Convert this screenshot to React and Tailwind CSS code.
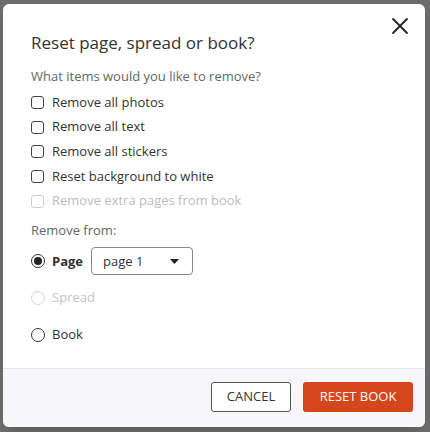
import React, { useState } from 'react';

const items = [
  { label: 'Remove all photos', disabled: false },
  { label: 'Remove all text', disabled: false },
  { label: 'Remove all stickers', disabled: false },
  { label: 'Reset background to white', disabled: false },
  { label: 'Remove extra pages from book', disabled: true },
];

const Checkbox = ({ label, disabled }) => (
  <label className={`flex items-center gap-[8px] h-[24.7px] ${disabled ? 'text-[#bdbdbd]' : 'text-[#333]'}`}>
    <span className={`w-[13px] h-[13px] rounded-[3px] border-[1.5px] ${disabled ? 'border-[#cfcfcf]' : 'border-[#444]'} bg-white`} />
    <span className="text-[13px]">{label}</span>
  </label>
);

const Radio = ({ label, checked, disabled, bold }) => (
  <div className={`flex items-center gap-[7px] ${disabled ? 'text-[#c4c4c4]' : 'text-[#333]'}`}>
    <span
      className={`w-[14px] h-[14px] rounded-full border-[1.5px] flex items-center justify-center bg-white ${
        disabled ? 'border-[#d4d4d4]' : 'border-[#333]'
      }`}
    >
      {checked && <span className="w-[8px] h-[8px] rounded-full bg-[#222]" />}
    </span>
    <span className={`text-[13px] ${bold ? 'font-bold' : ''}`}>{label}</span>
  </div>
);

export default function App() {
  const [page] = useState('page 1');
  return (
    <div
      className="w-[430px] h-[432px] bg-[#6d6d6d] pt-[4px] pl-[3px] pr-[5px] pb-[5px]"
      style={{ fontFamily: '"Open Sans", "Liberation Sans", sans-serif' }}
    >
      <div className="relative h-full bg-white rounded-[6px] flex flex-col overflow-hidden shadow-lg">
        <button className="absolute right-[16px] top-[13px] text-[#222]">
          <svg width="18" height="18" viewBox="0 0 18 18" fill="none" stroke="currentColor" strokeWidth="1.8" strokeLinecap="round">
            <path d="M2 2 L16 16 M16 2 L2 16" />
          </svg>
        </button>
        <div className="flex-1 pl-[28px] pt-[27px]">
          <h2 className="text-[17px] leading-[24px] text-[#333]">Reset page, spread or book?</h2>
          <p className="mt-[12px] text-[13px] leading-[18px] text-[#666]">What items would you like to remove?</p>
          <div className="mt-[5px] flex flex-col">
            {items.map(it => (
              <Checkbox key={it.label} {...it} />
            ))}
          </div>
          <p className="mt-[8px] text-[13px] leading-[18px] text-[#666]">Remove from:</p>
          <div className="mt-[8px] flex flex-col">
            <div className="flex items-center gap-[8px] h-[28px]">
              <Radio label="Page" checked bold />
              <div className="w-[102px] h-[28px] border border-[#888] rounded-[4px] flex items-center justify-between pl-[11px] pr-[13px] text-[13px] text-[#333]">
                <span>{page}</span>
                <svg width="9" height="5" viewBox="0 0 9 5"><path d="M0 0 H9 L4.5 5 Z" fill="#222" /></svg>
              </div>
            </div>
            <div className="h-[34px] flex items-end pb-[2px]">
              <Radio label="Spread" disabled />
            </div>
            <div className="h-[37px] flex items-end pb-[2px]">
              <Radio label="Book" />
            </div>
          </div>
        </div>
        <div className="h-[59px] border-t border-[#e4e4e8] bg-[#f7f7f9] flex items-center justify-end gap-[12px] pr-[12px] pb-[2px]">
          <button className="w-[80px] h-[30px] border border-[#555] rounded-[3px] bg-white text-[13px] text-[#333] uppercase">
            Cancel
          </button>
          <button className="w-[110px] h-[30px] rounded-[3px] bg-[#d4461b] text-[13px] text-white uppercase">
            Reset Book
          </button>
        </div>
      </div>
    </div>
  );
}
